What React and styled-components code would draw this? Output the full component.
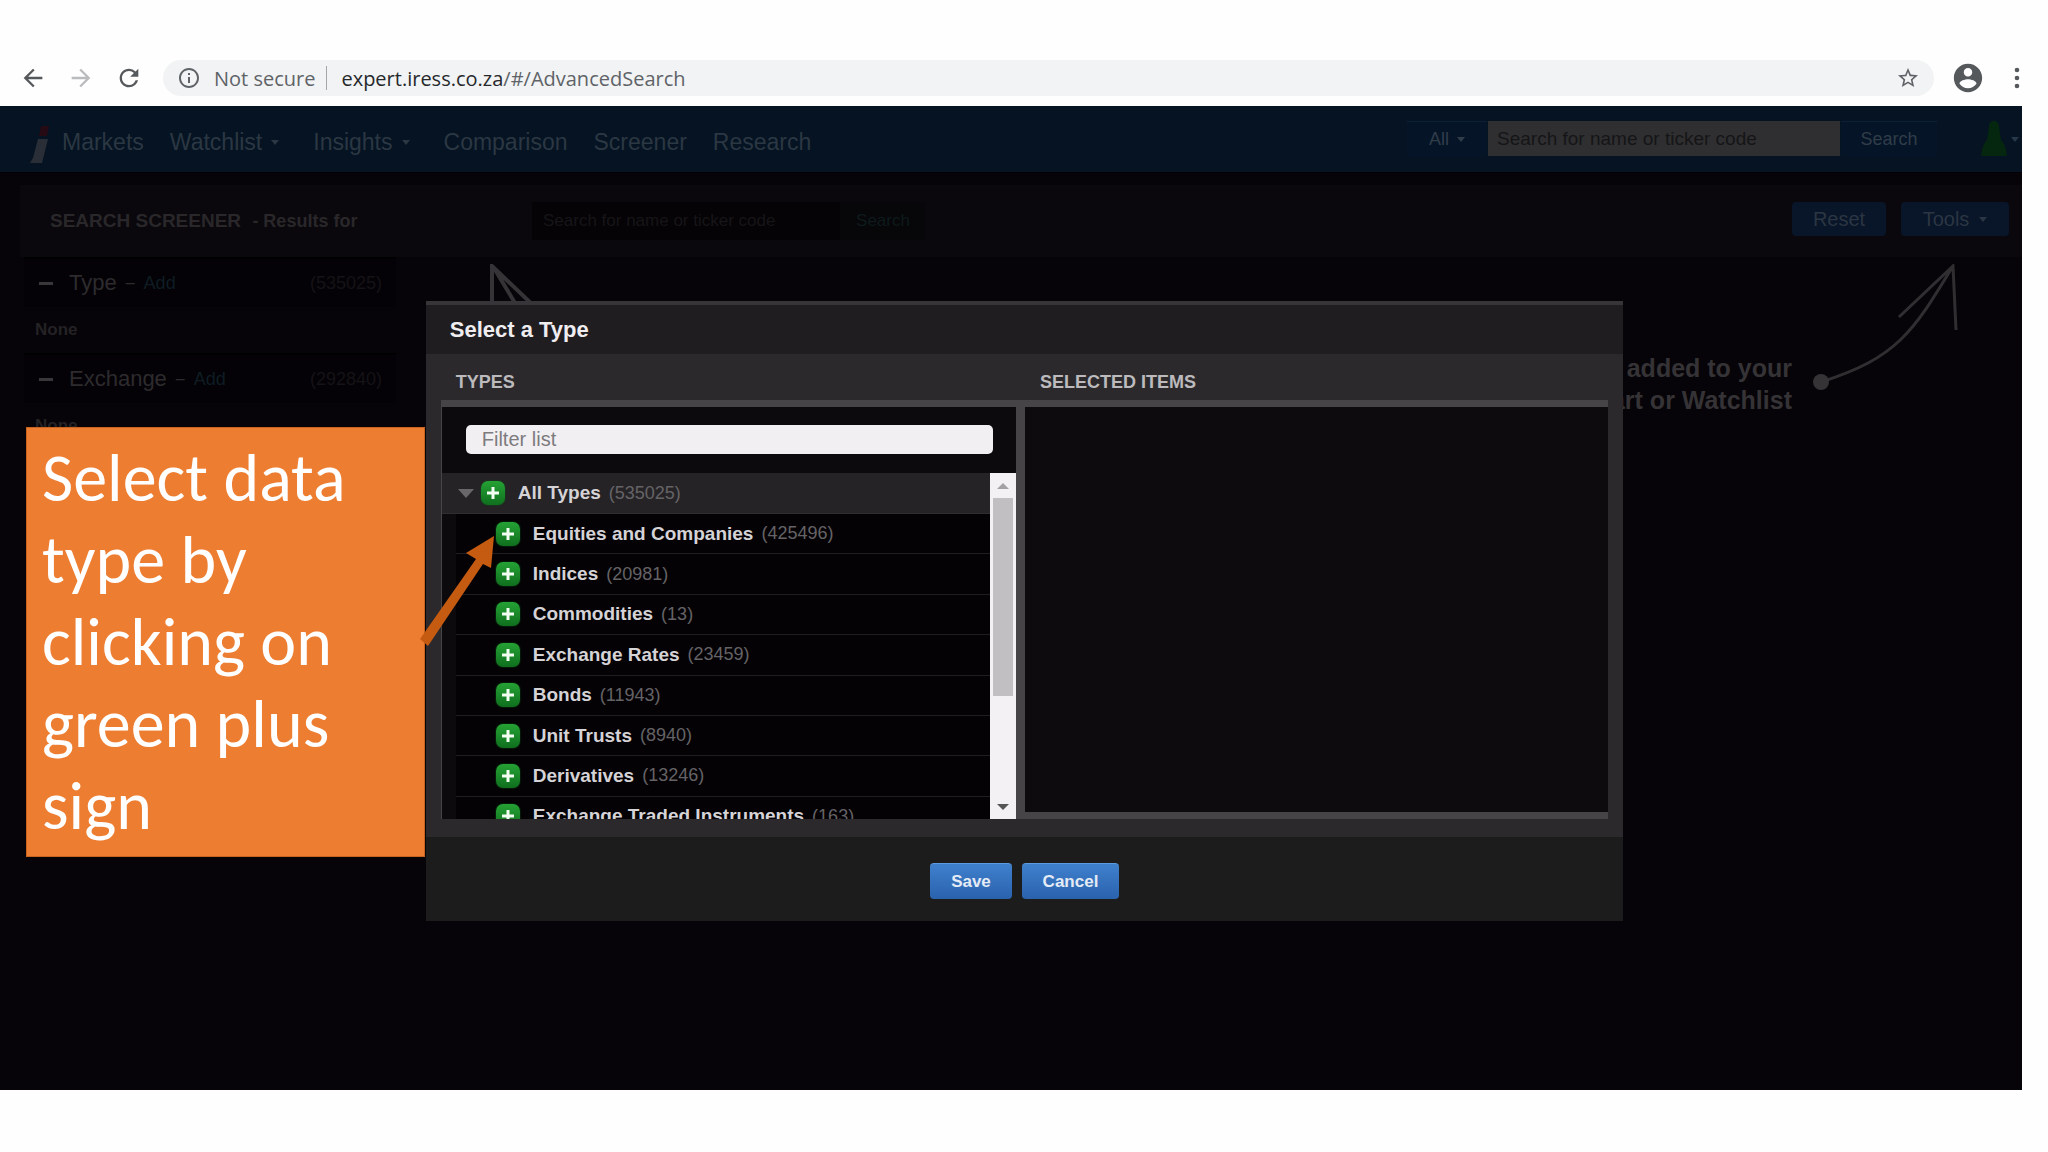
import React, { useState } from 'react';
import styled, { createGlobalStyle } from 'styled-components';
import {
  MdArrowBack,
  MdArrowForward,
  MdInfoOutline,
  MdRefresh,
  MdStarBorder,
} from 'react-icons/md';

const navItems = [
  { label: 'Markets' },
  { label: 'Watchlist', menu: true },
  { label: 'Insights', menu: true },
  { label: 'Comparison' },
  { label: 'Screener' },
  { label: 'Research' },
];

const criteria = [
  { name: 'Type', count: 535025 },
  { name: 'Exchange', count: 292840 },
];

const types = [
  { name: 'Equities and Companies', count: 425496 },
  { name: 'Indices', count: 20981 },
  { name: 'Commodities', count: 13 },
  { name: 'Exchange Rates', count: 23459 },
  { name: 'Bonds', count: 11943 },
  { name: 'Unit Trusts', count: 8940 },
  { name: 'Derivatives', count: 13246 },
  { name: 'Exchange Traded Instruments', count: 163 },
];

const AddButton = ({ name }) => (
  <Plus type="button" aria-label={`Add ${name}`}>
    <svg width="14" height="14" viewBox="0 0 14 14">
      <path d="M7 1v12M1 7h12" stroke="#f4fff4" strokeWidth="3" />
    </svg>
  </Plus>
);

const BrowserBar = () => (
  <Toolbar>
    <ToolButton aria-label="Back"><MdArrowBack /></ToolButton>
    <ToolButton aria-label="Forward" $muted><MdArrowForward /></ToolButton>
    <ToolButton aria-label="Reload"><MdRefresh /></ToolButton>
    <Address>
      <MdInfoOutline size={24} />
      <span>Not secure</span>
      <Divider />
      <Url><b>expert.iress.co.za</b>/#/AdvancedSearch</Url>
      <MdStarBorder size={24} />
    </Address>
    <ToolButton aria-label="Profile" $large>
      <svg width="34" height="34" viewBox="0 0 24 24" fill="currentColor">
        <path d="M12 2C6.48 2 2 6.48 2 12s4.48 10 10 10 10-4.48 10-10S17.52 2 12 2zm0 3c1.66 0 3 1.34 3 3s-1.34 3-3 3-3-1.34-3-3 1.34-3 3-3zm0 14.2c-2.5 0-4.71-1.28-6-3.22.03-1.99 4-3.08 6-3.08 1.99 0 5.97 1.09 6 3.08-1.29 1.94-3.5 3.22-6 3.22z" />
      </svg>
    </ToolButton>
    <MenuButton aria-label="Menu">
      <svg width="6" height="22" viewBox="0 0 6 22" fill="currentColor">
        <circle cx="3" cy="3" r="2.3" />
        <circle cx="3" cy="11" r="2.3" />
        <circle cx="3" cy="19" r="2.3" />
      </svg>
    </MenuButton>
  </Toolbar>
);

const NavBar = () => (
  <Nav>
    <Logo width="18" height="38" viewBox="0 0 18 38">
      <path d="M11 0h8l-2 10H9z" fill="#260b15" />
      <path d="M8 13h10l-6 24H0l3-5z" fill="#2a2f37" />
    </Logo>
    <NavLinks>
      {navItems.map((item) => (
        <NavLink key={item.label} href="#" $menu={item.menu}>
          {item.label}
          {item.menu && <Caret />}
        </NavLink>
      ))}
    </NavLinks>
    <SearchGroup>
      <NavButton type="button" $width={80}>All <Caret /></NavButton>
      <NavInput aria-label="Search" placeholder="Search for name or ticker code" />
      <NavButton type="button" $width={96}>Search</NavButton>
    </SearchGroup>
    <UserButton type="button" aria-label="Account">
      <svg width="26" height="36" viewBox="0 0 26 36">
        <path d="M13 0c3 0 5 2 5 5l2 14c3 3 5 7 6 16H0c1-9 3-13 6-16L8 5c0-3 2-5 5-5z" fill="#05260f" />
      </svg>
      <Caret />
    </UserButton>
  </Nav>
);

const Screener = () => (
  <Content>
    <ScreenerHeader>
      <Title>SEARCH SCREENER <small>- Results for</small></Title>
      <ScreenerSearch>
        <input aria-label="Search in results" placeholder="Search for name or ticker code" />
        <button type="button">Search</button>
      </ScreenerSearch>
      <Actions>
        <DimButton type="button" $width={94}>Reset</DimButton>
        <DimButton type="button" $width={108}>Tools <Caret /></DimButton>
      </Actions>
    </ScreenerHeader>
    <Sidebar>
      {criteria.map((item) => (
        <section key={item.name}>
          <CriteriaHead>
            <Minus />
            <h2>{item.name}</h2>
            <span>–</span>
            <a href="#">Add</a>
            <em>({item.count})</em>
          </CriteriaHead>
          <CriteriaValue>None</CriteriaValue>
        </section>
      ))}
    </Sidebar>
    <LeftHint width="46" height="60" viewBox="0 0 46 60">
      <path d="M2 60V2L46 44M4 4l30 50" />
    </LeftHint>
    <RightHint>
      <p>
        added to your
        <br />
        Chart or Watchlist
      </p>
      <svg width="150" height="132" viewBox="0 0 150 132">
        <path d="M8 118C84 94 100 68 140 2M86 53L140 2l3 64" />
        <circle cx="8" cy="118" r="8" />
      </svg>
    </RightHint>
  </Content>
);

const TypeDialog = () => {
  const [filter, setFilter] = useState('');
  const shown = types.filter((t) => t.name.toLowerCase().includes(filter.toLowerCase()));

  return (
    <Dialog role="dialog" aria-labelledby="dialog-title">
      <DialogHeader id="dialog-title">Select a Type</DialogHeader>
      <DialogBody>
        <PaneTitle>TYPES</PaneTitle>
        <PaneTitle>SELECTED ITEMS</PaneTitle>
        <Pane>
          <Filter
            aria-label="Filter list"
            placeholder="Filter list"
            value={filter}
            onChange={(event) => setFilter(event.target.value)}
          />
          <ListArea>
            <Tree>
              <RootRow>
                <Expander />
                <AddButton name="All Types" />
                <TypeName>All Types</TypeName>
                <Count>(535025)</Count>
              </RootRow>
              <TypeList>
                {shown.map((type) => (
                  <TypeRow key={type.name}>
                    <AddButton name={type.name} />
                    <TypeName>{type.name}</TypeName>
                    <Count>({type.count})</Count>
                  </TypeRow>
                ))}
              </TypeList>
            </Tree>
            <Scrollbar>
              <ScrollArrow $up />
              <Thumb />
              <ScrollArrow />
            </Scrollbar>
          </ListArea>
        </Pane>
        <SelectedPane />
      </DialogBody>
      <DialogFooter>
        <BlueButton type="button" $width={82}>Save</BlueButton>
        <BlueButton type="button" $width={97}>Cancel</BlueButton>
      </DialogFooter>
    </Dialog>
  );
};

const App = () => (
  <Page>
    <GlobalStyle />
    <BrowserBar />
    <Site>
      <NavBar />
      <Screener />
    </Site>
    <Overlay>
      <TypeDialog />
    </Overlay>
    <Callout>Select data type by clicking on green plus sign</Callout>
    <Pointer width="80" height="112" viewBox="0 0 80 112">
      <path d="M0 103L56 23 46 17 74 0 71 32 63 28 8 110z" />
    </Pointer>
  </Page>
);

export default App;

const GlobalStyle = createGlobalStyle`
  * {
    box-sizing: border-box;
  }

  body {
    margin: 0;
    background: #fefefe;
    font-family: "Liberation Sans", Arial, sans-serif;
  }

  button, input {
    font-family: inherit;
    border: 0;
    padding: 0;
  }

  h1, h2, p, ul {
    margin: 0;
    padding: 0;
  }
`;

const Page = styled.div`
  position: relative;
  display: flex;
  flex-direction: column;
  min-height: 100vh;
  padding: 50px 26px 62px 0;
  overflow: hidden;
`;

const Toolbar = styled.div`
  display: flex;
  align-items: center;
  height: 56px;
  padding-left: 9px;
`;

const ToolButton = styled.button`
  display: flex;
  justify-content: center;
  width: ${(props) => (props.$large ? '68px' : '48px')};
  background: none;
  font-size: 28px;
  color: ${(props) => (props.$muted ? '#b9bbbd' : '#56595c')};
`;

const MenuButton = styled.button`
  display: flex;
  justify-content: flex-end;
  width: 18px;
  margin-right: 2px;
  background: none;
  color: #56595c;
`;

const Address = styled.div`
  display: flex;
  flex: 1;
  align-items: center;
  height: 36px;
  margin-left: 10px;
  padding: 0 14px;
  border-radius: 18px;
  background: #f1f3f4;
  color: #5f6368;
  font: 20px "Open Sans", sans-serif;

  span {
    margin-left: 13px;
  }
`;

const Divider = styled.i`
  width: 1px;
  height: 24px;
  margin: 0 14px 0 11px;
  background: #a4a7aa;
`;

const Url = styled.div`
  flex: 1;

  b {
    font-weight: 400;
    color: #26282b;
  }
`;

const Site = styled.div`
  display: flex;
  flex: 1;
  flex-direction: column;
  background: #060408;
`;

const Nav = styled.nav`
  display: flex;
  align-items: center;
  height: 66px;
  padding: 0 3px 0 30px;
  background: #051322;
`;

const Logo = styled.svg`
  margin-top: 12px;
  overflow: visible;
`;

const NavLinks = styled.div`
  display: flex;
  flex: 1;
  gap: 26px;
  padding-top: 7px;
  margin-left: 14px;
`;

const NavLink = styled.a`
  display: flex;
  align-items: center;
  gap: 9px;
  margin-right: ${(props) => (props.$menu ? '8px' : '0')};
  color: #2b3742;
  font-size: 23px;
  text-decoration: none;
`;

const Caret = styled.i`
  display: inline-block;
  border: 4px solid transparent;
  border-top: 5px solid currentColor;
  border-bottom: 0;
`;

const SearchGroup = styled.div`
  display: flex;
  gap: 1px;
`;

const NavButton = styled.button`
  display: flex;
  align-items: center;
  justify-content: center;
  gap: 8px;
  width: ${(props) => props.$width}px;
  height: 36px;
  border-top: 1px solid #0c2036;
  background: #051427;
  color: #303d49;
  font-size: 18px;
`;

const NavInput = styled.input`
  width: 352px;
  height: 35px;
  padding: 0 9px;
  background: #2f2f31;
  font-size: 19px;

  &::placeholder {
    color: #151517;
    opacity: 1;
  }
`;

const UserButton = styled.button`
  display: flex;
  align-items: center;
  gap: 4px;
  margin-left: 44px;
  background: none;
  color: #26384a;
`;

const Content = styled.main`
  position: relative;
  flex: 1;
  padding: 12px 0 0 20px;
  border-top: 1px solid #020103;
`;

const ScreenerHeader = styled.header`
  display: flex;
  align-items: center;
  height: 72px;
  padding: 0 13px 0 30px;
  background: #0a080c;
`;

const Title = styled.h1`
  width: 482px;
  color: #29272a;
  font-size: 19px;

  small {
    margin-left: 6px;
    font-size: 18px;
  }
`;

const ScreenerSearch = styled.div`
  display: flex;
  flex: 1;

  input {
    width: 308px;
    height: 38px;
    padding: 0 11px;
    background: #050306;
    font-size: 17px;
  }

  input::placeholder {
    color: #171518;
    opacity: 1;
  }

  button {
    width: 86px;
    background: #070609;
    color: #0d1b1b;
    font-size: 17px;
  }
`;

const Actions = styled.div`
  display: flex;
  align-self: flex-start;
  gap: 15px;
  padding-top: 17px;
`;

const DimButton = styled.button`
  display: flex;
  align-items: center;
  justify-content: center;
  gap: 10px;
  width: ${(props) => props.$width}px;
  height: 34px;
  border-radius: 4px;
  background: #091528;
  color: #2b3543;
  font-size: 20px;
`;

const Sidebar = styled.aside`
  width: 376px;
  padding-left: 4px;
`;

const CriteriaHead = styled.div`
  display: flex;
  align-items: center;
  gap: 9px;
  height: 50px;
  padding: 0 14px 0 15px;
  border-top: 2px solid #010001;
  background: #040206;
  color: #2d2b2e;

  h2 {
    margin-left: 7px;
    font-size: 22px;
    font-weight: 400;
  }

  a {
    color: #0e1d23;
    font-size: 18px;
    text-decoration: none;
  }

  em {
    margin-left: auto;
    color: #151316;
    font-size: 18px;
    font-style: normal;
  }
`;

const Minus = styled.i`
  width: 14px;
  height: 3px;
  background: #39373a;
`;

const CriteriaValue = styled.p`
  height: 46px;
  padding-left: 11px;
  color: #242225;
  font-size: 17px;
  font-weight: 700;
  line-height: 46px;
`;

const LeftHint = styled.svg`
  position: absolute;
  top: 91px;
  left: 490px;
  fill: none;
  stroke: #353336;
  stroke-width: 4;
`;

const RightHint = styled.div`
  position: absolute;
  top: 91px;
  right: 59px;
  display: flex;
  align-items: flex-end;
  gap: 21px;
  color: #353336;

  p {
    font-size: 25px;
    font-weight: 700;
    line-height: 32px;
    text-align: right;
  }

  svg {
    margin-bottom: 20px;
    fill: none;
    stroke: #302e31;
    stroke-width: 3;
  }

  circle {
    fill: #353336;
    stroke: none;
  }
`;

const Overlay = styled.div`
  position: absolute;
  inset: 0;
  display: flex;
  align-items: flex-start;
  justify-content: center;
  padding: 301px 0 0 1px;
`;

const Dialog = styled.div`
  width: 58.5%;
  border-top: 4px solid #373538;
  background: #1d1c1d;
`;

const DialogHeader = styled.h2`
  padding: 0 24px;
  background: #1f1d20;
  color: #efedf0;
  font-size: 22px;
  line-height: 49px;
`;

const DialogBody = styled.div`
  display: grid;
  grid-template-columns: 584fr 583fr;
  grid-template-rows: 46px 419px;
  padding: 0 15px 18px;
  background: #2b292c;
`;

const PaneTitle = styled.h3`
  margin: 0;
  padding: 5px 15px 0;
  color: #bcbabd;
  font-size: 18px;
  line-height: 46px;
`;

const Pane = styled.div`
  display: flex;
  flex-direction: column;
  border: solid #464447;
  border-width: 7px 9px 0 1px;
  background: #0c0a0d;
`;

const Filter = styled.input`
  height: 29px;
  margin: 18px 23px 19px 24px;
  padding: 0 16px;
  border-radius: 5px;
  background: #f1eff2;
  color: #333;
  font-size: 20px;

  &::placeholder {
    color: #7d7b7e;
    opacity: 1;
  }
`;

const ListArea = styled.div`
  display: flex;
  flex: 1;
  min-height: 0;
`;

const Tree = styled.div`
  flex: 1;
  overflow: hidden;
`;

const Row = styled.div`
  display: flex;
  align-items: center;
`;

const RootRow = styled(Row)`
  height: 41px;
  padding-left: 16px;
  background: #252326;
  border-bottom: 1px solid #302e31;
`;

const Expander = styled.i`
  margin-right: 7px;
  border: 8px solid transparent;
  border-top: 9px solid #69676a;
  border-bottom: 0;
`;

const Plus = styled.button`
  display: flex;
  align-items: center;
  justify-content: center;
  width: 24px;
  height: 24px;
  margin-right: 13px;
  border-radius: 7px;
  background: linear-gradient(#25a234, #0f6f1e);
  box-shadow: 0 0 2px #0c5a18;
`;

const TypeName = styled.span`
  color: #d5d3d6;
  font-size: 19px;
  font-weight: 700;
`;

const Count = styled.span`
  margin-left: 8px;
  color: #656366;
  font-size: 18px;
`;

const TypeList = styled.ul`
  display: grid;
  grid-template-rows: repeat(8, 1fr);
  height: 323px;
  margin-left: 14px;
  background: #040205;
  list-style: none;
`;

const TypeRow = styled(Row).attrs({ as: 'li' })`
  padding-left: 40px;
  border-bottom: 1px solid #1f1d20;
`;

const Scrollbar = styled.div`
  display: flex;
  flex-direction: column;
  width: 26px;
  background: #f3f1f4;
`;

const ScrollArrow = styled.i`
  display: flex;
  align-items: center;
  justify-content: center;
  height: 25px;

  &::before {
    content: '';
    border: 6px solid transparent;
    border-top: ${(props) => (props.$up ? '0' : '6px solid #555')};
    border-bottom: ${(props) => (props.$up ? '6px solid #a3a1a4' : '0')};
  }
`;

const Thumb = styled.div`
  height: 198px;
  margin: 0 3px auto;
  background: #c1bfc2;
`;

const SelectedPane = styled.div`
  border-top: 7px solid #464447;
  border-bottom: 7px solid #464447;
  background: #0d0b0e;
`;

const DialogFooter = styled.div`
  display: flex;
  justify-content: center;
  gap: 10px;
  padding: 26px 0 22px;
`;

const BlueButton = styled.button`
  width: ${(props) => props.$width}px;
  height: 36px;
  border-radius: 4px;
  border-top: 1px solid #5c9be0;
  background: linear-gradient(#3f80cd, #2a62ad);
  color: #e4ebf5;
  font-size: 17px;
  font-weight: 700;
`;

const Callout = styled.aside`
  position: absolute;
  top: 427px;
  left: 26px;
  width: 399px;
  padding: 9px 15px 9px;
  border: 1px solid #c9641f;
  background: #ed7d31;
  color: #fff;
  font: 68px/82px Carlito, Lato, sans-serif;
`;

const Pointer = styled.svg`
  position: absolute;
  top: 536px;
  left: 420px;
  fill: #c55a11;
`;
